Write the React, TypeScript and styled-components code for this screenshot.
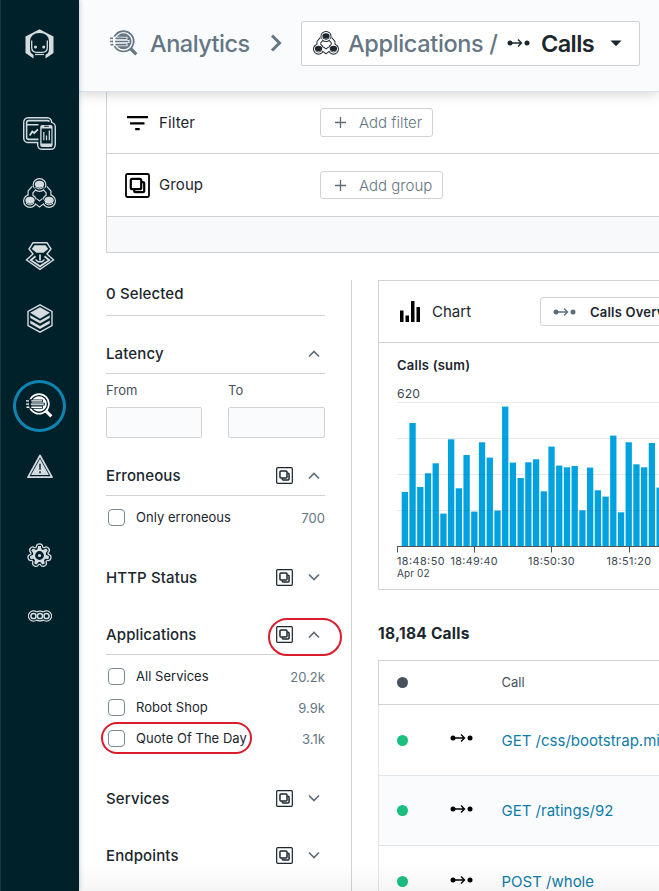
import React from "react";
import styled, { createGlobalStyle } from "styled-components";

const Global = createGlobalStyle`
  *, *::before, *::after { box-sizing: border-box; }
  html, body { margin: 0; padding: 0; overflow: hidden; background: #fff; }
  body { font-family: Inter, "Liberation Sans", sans-serif; color: #1b262d; }
  svg { display: block; flex: none; }
`;

const NAVY = "#00202a";
const PALE = "#d5dce0";
const LINE = "#cfd3d6";

/* ---------- icons ---------- */

type Tone = { fg: string; bg: string; size: number };

const RobotIcon = () => (
  <svg width="29" height="30" viewBox="0 0 29 30">
    <path d="M14.500 .3 28.500 7.500V24L20.500 29.500V25H8.500v4.500L.5 24V7.500z" fill={PALE} />
    <path d="M5 12.500Q5.300 4 14.500 4t9.500 8.500v7.500q0 6-6 6h-7q-6 0-6-6z" fill={NAVY} />
    <path d="M6.700 11.500v7q0 4.800 4.800 4.800h6q4.800 0 4.800-4.800v-7" fill="none" stroke={PALE} strokeWidth="1.300" />
    <path d="M9.800 26.800h9.400V30H9.800z" fill={NAVY} />
    <path d="M10 25.500h9" stroke={PALE} strokeWidth="1.200" />
    <circle cx="10.500" cy="18" r="1.500" fill={PALE} />
    <circle cx="18.700" cy="18" r="1.500" fill={PALE} />
  </svg>
);

const DevicesIcon = () => (
  <svg width="33" height="33" viewBox="0 0 32 32" fill="none">
    <g fill={PALE}>
      <rect x="0" y="0" width="28.500" height="25.500" rx="5" />
      <rect x="13.500" y="4.500" width="18.500" height="27.500" rx="5" />
    </g>
    <g fill={NAVY}>
      <rect x="1.400" y="1.400" width="25.700" height="22.700" rx="3.800" />
      <rect x="14.900" y="5.900" width="15.700" height="24.700" rx="3.800" />
    </g>
    <path d="M15 21.700H5.500q-2 0-2-2V5.500q0-2 2-2H24q1 0 1.500 1M3.500 7.500h11.500" stroke={PALE} strokeWidth="1.500" />
    <path d="m6.500 18 2.500-4 2 1.500 3.500-3.500" stroke={PALE} strokeWidth="1.700" />
    <rect x="16.700" y="7.700" width="12" height="21.400" rx="2" fill={PALE} />
    <path d="M18 11.200h9.500v14.500H18zM20.500 8.500h4.500v1h-4.500z" fill={NAVY} />
    <path d="M20.200 14.500v8M22.800 18v4.500M25.500 13v9.500" stroke={PALE} strokeWidth="1.200" />
  </svg>
);

const ClusterIcon = ({ fg, bg, size }: Tone) => (
  <svg width={size} height={(size * 31) / 33} viewBox="0 0 33 31" fill="none">
    <path d="M11 10 7.500 14V22M22 10l3.500 4V22M12 22.500l4.500 3.500 4.500-3.500" stroke={fg} strokeWidth="6" />
    <g fill={fg}>
      <circle cx="16.500" cy="7" r="7" />
      <circle cx="7" cy="23" r="7" />
      <circle cx="26" cy="23" r="7" />
    </g>
    <path d="M11 10 7.500 14V22M22 10l3.500 4V22M12 22.500l4.500 3.500 4.500-3.500" stroke={bg} strokeWidth="3.600" />
    <g fill={bg}>
      <circle cx="16.500" cy="7" r="5.800" />
      <circle cx="7" cy="23" r="5.800" />
      <circle cx="26" cy="23" r="5.800" />
    </g>
    <g fill={fg}>
      <ellipse cx="16.500" cy="6.200" rx="4.600" ry="3.500" />
      <ellipse cx="7" cy="22.200" rx="4.600" ry="3.500" />
      <ellipse cx="26" cy="22.200" rx="4.600" ry="3.500" />
    </g>
    <path d="M12.300 9q4.200 3.800 8.400 0M2.800 25q4.200 3.800 8.400 0M21.800 25q4.200 3.800 8.400 0" stroke={fg} strokeWidth="1" />
  </svg>
);

const PlatformIcon = () => (
  <svg width="30" height="30" viewBox="0 0 30 30" fill="none" stroke={PALE} strokeWidth="1.400">
    <path d="M8 1.700h14L26 8l-4 5 6.500 6L15 28.300 1.500 19 8 13 4 8z" />
    <path d="M9.500 4.300h11l2.700 3.700-4.700 3.800h-7L6.800 8z" fill={PALE} stroke="none" />
    <path d="M10.500 15.200 5.800 19.200 15 25.300l9.200-6.100-4.700-4" strokeWidth="1.800" />
    <path d="M15 13.500v6" strokeWidth="1.700" />
    <path d="m10.500 18.500 2.500 2.300h4l2.500-2.300" />
  </svg>
);

const LayersIcon = () => (
  <svg width="26" height="29" viewBox="0 0 26 29" fill="none">
    <path d="M13 .9 25 7.500v14L13 28.100 1 21.500v-14z" stroke={PALE} strokeWidth="1.400" />
    <path d="m13 3.300 9.900 5.500L13 14.700 3.100 8.800z" fill={PALE} />
    <path d="M3.300 11.200v2.900l9.700 5.500 9.700-5.500v-2.900L13 16.700zM3.300 16.500v2.900l9.700 5.500 9.700-5.500v-2.900L13 22z" fill={PALE} />
  </svg>
);

const SearchDataIcon = ({ fg, bg, size }: Tone) => (
  <svg width={size} height={(size * 26) / 28} viewBox="0 0 28 26" fill="none">
    <circle cx="13.500" cy="11.300" r="10.200" stroke={fg} strokeWidth="1.700" />
    <circle cx="13.500" cy="11.300" r="8" fill={fg} />
    <path d="M2.500 6.500h3v9.600h-3z" fill={bg} />
    <path d="M5 8.200h12.500M5 11.500h14.500M5 14.800h12.500" stroke={bg} strokeWidth="2.900" />
    <path d="M0 8.200h3M0 11.500h3M.5 14.800h3M5.500 8.200h11M5 11.500h13.500M5.500 14.800h11" stroke={fg} strokeWidth="1.400" />
    <path d="m20.500 18.500 5.800 5.800" stroke={fg} strokeWidth="3.200" />
  </svg>
);

const AlertIcon = () => (
  <svg width="26" height="25" viewBox="0 0 26 25" fill="none">
    <path d="M13 1.500 25 23.200H1z" stroke={PALE} strokeWidth="1.700" strokeLinejoin="round" />
    <path d="m13 4.700 8.900 16.400H4.100z" fill={PALE} />
    <path d="M13 9.800v6M13 17.300v2" stroke={NAVY} strokeWidth="1.400" />
  </svg>
);

const TEETH = Array.from({ length: 7 }, (_, i) => (i * 360) / 7);

const GearIcon = () => (
  <svg width="25" height="25" viewBox="-12.500 -12.500 25 25">
    <g fill={PALE}>
      <circle r="9.500" />
      {TEETH.map((a) => <circle key={a} cy="-8.500" r="3.800" transform={`rotate(${a})`} />)}
    </g>
    <g fill={NAVY}>
      <circle r="8.500" />
      {TEETH.map((a) => <circle key={a} cy="-8.500" r="2.500" transform={`rotate(${a})`} />)}
    </g>
    <circle r="6.600" fill={PALE} />
    {TEETH.map((a) => (
      <path key={a} d="M-2.300 -5 -1.300 -9.500H1.300L2.300 -5z" fill={PALE} transform={`rotate(${a})`} />
    ))}
    <circle r="3" fill={PALE} stroke={NAVY} strokeWidth="2.800" />
  </svg>
);

const MoreIcon = () => (
  <svg width="24" height="12" viewBox="0 0 24 12" fill="none" stroke={PALE}>
    <path d="M5.500 .9q2 0 3.200 1Q12 .2 15.300 1.900q1.200-1 3.200-1a5.100 5.100 0 0 1 0 10.200q-2 0-3.200-1-3.300 1.700-6.600 0-1.200 1-3.200 1A5.100 5.100 0 0 1 5.500.9z" strokeWidth="1.200" />
    <circle cx="5.500" cy="6" r="2.600" strokeWidth="1.500" />
    <circle cx="12" cy="6" r="2.600" strokeWidth="1.500" />
    <circle cx="18.500" cy="6" r="2.600" strokeWidth="1.500" />
  </svg>
);

const CallIcon = ({ color }: { color: string }) => (
  <svg width="23" height="10" viewBox="0 0 23 10" fill="none" stroke={color} strokeWidth="1.400">
    <circle cx="3" cy="5" r="2.500" fill={color} stroke="none" />
    <circle cx="20" cy="5" r="2.500" fill={color} stroke="none" />
    <path d="M4 5h10M11 1.500 14.500 5 11 8.500" />
  </svg>
);

const GroupIcon = ({ size, color = "#1b262d" }: { size: number; color?: string }) => (
  <svg width={size} height={size} viewBox="0 0 25 25" fill="none" stroke={color} strokeWidth="2.200">
    <rect x="1" y="1" width="23" height="23" rx="1.500" strokeWidth="1.800" />
    <rect x="5.800" y="5.800" width="10.400" height="10.400" rx="1.500" />
    <path d="M9.200 17v.8q0 1.400 1.400 1.400h7.200q1.400 0 1.400-1.400v-7.200q0-1.400-1.400-1.400H17" />
  </svg>
);

const Chevron = ({ up }: { up?: boolean }) => (
  <svg width="12" height="8" viewBox="0 0 12 8" fill="none" stroke="#5d6d78" strokeWidth="1.700">
    <path d={up ? "M1 6.500 6 1.500l5 5" : "M1 1.500l5 5 5-5"} />
  </svg>
);

const Plus = () => (
  <svg width="11" height="11" viewBox="0 0 11 11" stroke="#5d6d78" strokeWidth="1.300">
    <path d="M5.500 0v11M0 5.500h11" />
  </svg>
);

/* ---------- shell ---------- */

const Page = styled.div`
  position: relative;
  display: flex;
  width: 659px;
  height: 891px;
  overflow: hidden;
  background: #fff;
`;

const Sidebar = styled.nav`
  display: flex;
  flex-direction: column;
  align-items: center;
  flex: none;
  width: 79px;
  padding-right: 1px;
  background: ${NAVY};
  border-left: 1px solid #173640;
  box-shadow: 0 0 5px rgba(20, 60, 85, 0.3);
  z-index: 2;
`;

const NavItem = styled.div<{ $gap: number; $active?: boolean }>`
  display: flex;
  align-items: center;
  justify-content: center;
  flex: none;
  width: 53px;
  height: 52px;
  margin-top: ${(p) => p.$gap}px;
  border-radius: 50%;
  border: ${(p) => (p.$active ? "3px solid #0f84b2" : "none")};
`;

const Main = styled.main`
  display: flex;
  flex-direction: column;
  width: 580px;
  flex: none;
  overflow: hidden;
`;

const TopBar = styled.header`
  display: flex;
  align-items: center;
  flex: none;
  height: 92px;
  padding: 0 0 5px 31px;
  background: #f9fbfd;
  border-bottom: 1px solid #dbe2ea;
  box-shadow: 0 2px 12px rgba(0, 0, 0, 0.17);
  font-size: 23.500px;
  z-index: 1;
`;

const Crumb = styled.span<{ $gap: number; $width: number; $track: number; $current?: boolean }>`
  flex: none;
  width: ${(p) => p.$width}px;
  margin-left: ${(p) => p.$gap}px;
  white-space: nowrap;
  font-weight: ${(p) => (p.$current ? 600 : 500)};
  letter-spacing: ${(p) => p.$track}px;
  color: ${(p) => (p.$current ? "#1b262d" : "#657684")};
`;

const CrumbArrow = styled.svg`
  margin-right: 19px;
`;

const SourceSelect = styled.div`
  display: flex;
  align-items: center;
  flex: none;
  width: 339px;
  height: 45px;
  padding-left: 11px;
  background: #fff;
  border: 1px solid ${LINE};
  border-radius: 2px;
`;

const QueryPanel = styled.section`
  flex: none;
  margin-left: 27px;
  border-left: 1px solid ${LINE};
`;

const QueryRow = styled.div<{ $height: number }>`
  display: flex;
  align-items: center;
  height: ${(p) => p.$height}px;
  padding-left: 18px;
  border-bottom: 1px solid ${LINE};
`;

const QueryLabel = styled.span<{ $lift?: number }>`
  flex: none;
  width: 170px;
  padding: 0 0 ${(p) => p.$lift ?? 0}px 9px;
  font-size: 15px;
  letter-spacing: 0.1px;
`;

const AddButton = styled.button<{ $width: number; $height: number }>`
  display: flex;
  align-items: center;
  gap: 13px;
  width: ${(p) => p.$width}px;
  height: ${(p) => p.$height}px;
  padding: 0 0 0 14px;
  background: #fff;
  border: 1px solid ${LINE};
  border-radius: 3px;
  color: #657684;
  font: 300 15px Inter, sans-serif;
  white-space: nowrap;
`;

const QueryFooter = styled.div`
  height: 36px;
  background: #f7f9fb;
  border-bottom: 1px solid ${LINE};
`;

const Columns = styled.div`
  display: flex;
  flex: 1;
  margin-top: 27px;
  min-height: 0;
`;

/* ---------- facets ---------- */

const Facets = styled.aside`
  flex: none;
  width: 273px;
  padding: 0 26px 0 27px;
  border-right: 1px solid ${LINE};
`;

const FacetHead = styled.div<{ $height: number; $ruled?: boolean; $lift?: number }>`
  position: relative;
  display: flex;
  align-items: center;
  height: ${(p) => p.$height}px;
  padding: 0 5px ${(p) => p.$lift ?? 0}px 0;
  border-bottom: 1px solid ${(p) => (p.$ruled ? LINE : "transparent")};
  font-size: 15px;
  font-weight: 500;
  letter-spacing: 0.12px;

  > span:first-child { flex: 1; }
  > svg + svg { margin-left: 15px; }
`;

const Spacer = styled.div<{ $height: number }>`
  height: ${(p) => p.$height}px;
`;

const RangeRow = styled.div`
  display: grid;
  grid-template-columns: 96px 97px;
  column-gap: 26px;
  padding-top: 8px;
`;

const RangeField = styled.label`
  display: flex;
  flex-direction: column;
  gap: 9px;
  color: #45525c;
  font-size: 13px;
  line-height: 16px;
  letter-spacing: 0.1px;
`;

const RangeInput = styled.input`
  width: 100%;
  height: 31px;
  background: #f9fbfd;
  border: 1px solid ${LINE};
  border-radius: 2px;
`;

const Option = styled.div`
  position: relative;
  display: flex;
  align-items: center;
  height: 31px;
  padding-left: 2px;
  font-size: 13px;
  letter-spacing: 0.03px;
`;

const Checkbox = styled.span`
  width: 17px;
  height: 17px;
  margin-right: 11px;
  border: 1px solid #7b8995;
  border-radius: 4px;
`;

const OptionLabel = styled.span`
  flex: 1;
  padding-bottom: 1px;
  white-space: nowrap;
`;

const OptionCount = styled.span`
  color: #657684;
`;

const Marker = styled.span<{ $x: number; $y: number; $w: number; $h: number }>`
  position: absolute;
  left: ${(p) => p.$x}px;
  top: ${(p) => p.$y}px;
  width: ${(p) => p.$w}px;
  height: ${(p) => p.$h}px;
  border: 2px solid #dc1c2c;
  border-radius: 19px;
  pointer-events: none;
`;

/* ---------- results ---------- */

const Results = styled.section`
  flex: none;
  width: 330px;
  margin-left: 26px;
`;

const ChartPanel = styled.div`
  height: 310px;
  border: 1px solid ${LINE};
`;

const ChartHead = styled.div`
  display: flex;
  align-items: center;
  height: 62px;
  padding-left: 21px;
  border-bottom: 1px solid ${LINE};
`;

const ChartLabel = styled.span`
  flex: none;
  width: 108px;
  font-size: 15px;
`;

const ChartPreset = styled.div`
  display: flex;
  align-items: center;
  gap: 14px;
  flex: none;
  width: 190px;
  height: 29px;
  padding-left: 12px;
  border: 1px solid ${LINE};
  border-radius: 3px;
  font-size: 13px;
  font-weight: 600;
  letter-spacing: 0.2px;
  white-space: nowrap;
`;

const ChartTitle = styled.div`
  height: 43px;
  padding: 14px 0 0 18px;
  font-size: 13px;
  line-height: 17px;
  font-weight: 600;
  letter-spacing: 0.23px;
`;

const ResultsTitle = styled.h2`
  height: 70px;
  margin: 0;
  padding-top: 34px;
  font-size: 15.500px;
  line-height: 20px;
  font-weight: 700;
  letter-spacing: 0.25px;
`;

const TableRow = styled.div<{ $height: number; $tint?: boolean; $head?: boolean }>`
  display: grid;
  grid-template-columns: 53px 51.500px 1fr;
  align-items: center;
  height: ${(p) => p.$height}px;
  padding-left: 18px;
  background: ${(p) => (p.$tint ? "#f9fbfd" : "#fff")};
  border-left: 1px solid ${(p) => (p.$head ? LINE : "#dfe4e8")};
  border-bottom: 1px solid ${(p) => (p.$head ? LINE : "#dfe4e8")};
  border-top: ${(p) => (p.$head ? `1px solid ${LINE}` : "none")};
  color: #45525c;
  font-size: 13px;
  white-space: nowrap;

  > svg { margin-top: -4px; }
`;

const HeadCell = styled.span`
  padding-bottom: 2px;
`;

const Dot = styled.span<{ $color: string }>`
  width: 11px;
  height: 11px;
  border-radius: 50%;
  background: ${(p) => p.$color};
`;

const CallLink = styled.a`
  color: #0f7ca8;
  font-size: 15px;
`;

const BottomFade = styled.div`
  position: absolute;
  left: 79px;
  right: 0;
  bottom: 0;
  height: 28px;
  background: linear-gradient(rgba(0, 0, 0, 0), rgba(0, 0, 0, 0.04));
  pointer-events: none;
  z-index: 3;
`;

const BARS = [
  54.3, 123.3, 59.3, 73, 83, 32.7, 107, 58, 91.3, 34.7, 104, 88.7, 35.7, 139.7, 83.7, 68.3, 84, 87,
  55, 99.7, 80.7, 79, 80.3, 36, 78.7, 56, 49.7, 110.7, 34, 104, 82, 79, 103.3, 58.7,
];

const CallsChart = () => (
  <svg width="280" height="203" viewBox="379 386 280 203" fontFamily="Inter, sans-serif" fill="#3b4751">
    <text x="397" y="398.300" fontSize="12.200" textLength="23">620</text>
    {BARS.map((h, i) => (
      <rect key={i} x={401.700 + i * 7.720} y={546.300 - h} width="6.300" height={h} fill="#00a2e0" />
    ))}
    {[402.5, 438.5, 474.5, 510.5].map((y) => (
      <path key={y} d={`M397 ${y}h262`} stroke="#28466e" strokeOpacity=".12" />
    ))}
    <path d="M397 546.500h262M397.500 546v6.500M474.500 546v6.500M551.500 546v6.500M629.500 546v6.500" stroke="#4b545b" fill="none" />
    <text x="397" y="565" fontSize="10.800" textLength="47.500">18:48:50</text>
    <text x="450.500" y="565" fontSize="10.800" textLength="47">18:49:40</text>
    <text x="528" y="565" fontSize="10.800" textLength="46.500">18:50:30</text>
    <text x="606.500" y="565" fontSize="10.800" textLength="44.500">18:51:20</text>
    <text x="397" y="577.300" fontSize="10" textLength="32.500">Apr 02</text>
  </svg>
);

const NAV: { gap: number; icon: React.ReactNode; active?: boolean }[] = [
  { gap: 18, icon: <RobotIcon /> },
  { gap: 37, icon: <DevicesIcon /> },
  { gap: 8, icon: <ClusterIcon fg={PALE} bg={NAVY} size={33} /> },
  { gap: 11, icon: <PlatformIcon /> },
  { gap: 10, icon: <LayersIcon /> },
  { gap: 36, icon: <SearchDataIcon fg="#fff" bg={NAVY} size={27} />, active: true },
  { gap: 8, icon: <AlertIcon /> },
  { gap: 37, icon: <GearIcon /> },
  { gap: 9, icon: <MoreIcon /> },
];

const APPS = [
  { name: "All Services", count: "20.2k" },
  { name: "Robot Shop", count: "9.9k" },
  { name: "Quote Of The Day", count: "3.1k", marked: true },
];

const CALLS = [
  { name: "GET /css/bootstrap.min.css", height: 71 },
  { name: "GET /ratings/92", height: 70, tint: true },
  { name: "POST /whole", height: 72 },
];

export default function App() {
  return (
    <Page>
      <Global />
      <Sidebar>
        {NAV.map((n, i) => (
          <NavItem key={i} $gap={n.gap} $active={n.active}>{n.icon}</NavItem>
        ))}
      </Sidebar>
      <Main>
        <TopBar>
          <SearchDataIcon fg="#657684" bg="#f9fbfd" size={28} />
          <Crumb $gap={12} $width={120} $track={-0.5}>Analytics</Crumb>
          <CrumbArrow width="12" height="18" viewBox="0 0 12 18" fill="none" stroke="#657684" strokeWidth="3">
            <path d="m2 1.500 7.500 7.500L2 16.500" />
          </CrumbArrow>
          <SourceSelect>
            <ClusterIcon fg="#1b262d" bg="#fff" size={26} />
            <Crumb $gap={9} $width={159} $track={-0.35}>Applications /</Crumb>
            <CallIcon color="#1b262d" />
            <Crumb $gap={11} $width={69} $track={-0.6} $current>Calls</Crumb>
            <svg width="12" height="7" viewBox="0 0 12 7" fill="#1b262d"><path d="M.5.500h11L6 6.300z" /></svg>
          </SourceSelect>
        </TopBar>
        <QueryPanel>
          <QueryRow $height={62}>
            <svg width="25" height="16" viewBox="0 0 25 16" fill="#000">
              <path d="M2 1h21v2.200H2zM5 7.300h14.500v2.200H5zM10.200 13h4.500v2.200h-4.500z" />
            </svg>
            <QueryLabel>Filter</QueryLabel>
            <AddButton $width={113} $height={29}><Plus />Add filter</AddButton>
          </QueryRow>
          <QueryRow $height={63}>
            <GroupIcon size={25} color="#000" />
            <QueryLabel $lift={2}>Group</QueryLabel>
            <AddButton $width={123} $height={28}><Plus />Add group</AddButton>
          </QueryRow>
          <QueryFooter />
        </QueryPanel>
        <Columns>
          <Facets>
            <FacetHead $height={36} $lift={8} $ruled><span>0 Selected</span></FacetHead>
            <Spacer $height={18} />
            <FacetHead $height={40} $ruled><span>Latency</span><Chevron up /></FacetHead>
            <RangeRow>
              <RangeField>From<RangeInput /></RangeField>
              <RangeField>To<RangeInput /></RangeField>
            </RangeRow>
            <Spacer $height={18} />
            <FacetHead $height={40} $ruled><span>Erroneous</span><GroupIcon size={17} /><Chevron up /></FacetHead>
            <Spacer $height={6} />
            <Option><Checkbox /><OptionLabel>Only erroneous</OptionLabel><OptionCount>700</OptionCount></Option>
            <Spacer $height={24} />
            <FacetHead $height={41}><span>HTTP Status</span><GroupIcon size={17} /><Chevron /></FacetHead>
            <Spacer $height={17} />
            <FacetHead $height={40} $ruled>
              <span>Applications</span><GroupIcon size={17} /><Chevron up />
              <Marker $x={162} $y={3} $w={74} $h={38} />
            </FacetHead>
            <Spacer $height={6} />
            {APPS.map((a) => (
              <Option key={a.name}>
                <Checkbox /><OptionLabel>{a.name}</OptionLabel><OptionCount>{a.count}</OptionCount>
                {a.marked && <Marker $x={-5} $y={-1} $w={151} $h={32} />}
              </Option>
            ))}
            <Spacer $height={24} />
            <FacetHead $height={41}><span>Services</span><GroupIcon size={17} /><Chevron /></FacetHead>
            <Spacer $height={16} />
            <FacetHead $height={41}><span>Endpoints</span><GroupIcon size={17} /><Chevron /></FacetHead>
          </Facets>
          <Results>
            <ChartPanel>
              <ChartHead>
                <svg width="32" height="21" viewBox="0 0 32 21" fill="#000">
                  <path d="M0 9.500h3.500V21H0zM5.500 14.500H9V21H5.500zM11 0h3.500v21H11zM16.500 6H20v15h-3.500z" />
                </svg>
                <ChartLabel>Chart</ChartLabel>
                <ChartPreset><CallIcon color="#5d6d78" />Calls Overview</ChartPreset>
              </ChartHead>
              <ChartTitle>Calls (sum)</ChartTitle>
              <CallsChart />
            </ChartPanel>
            <ResultsTitle>18,184 Calls</ResultsTitle>
            <TableRow $height={45} $head><Dot $color="#47525d" /><span /><HeadCell>Call</HeadCell></TableRow>
            {CALLS.map((c) => (
              <TableRow key={c.name} $height={c.height} $tint={c.tint}>
                <Dot $color="#1abf80" /><CallIcon color="#000" /><CallLink>{c.name}</CallLink>
              </TableRow>
            ))}
          </Results>
        </Columns>
      </Main>
      <BottomFade />
    </Page>
  );
}
